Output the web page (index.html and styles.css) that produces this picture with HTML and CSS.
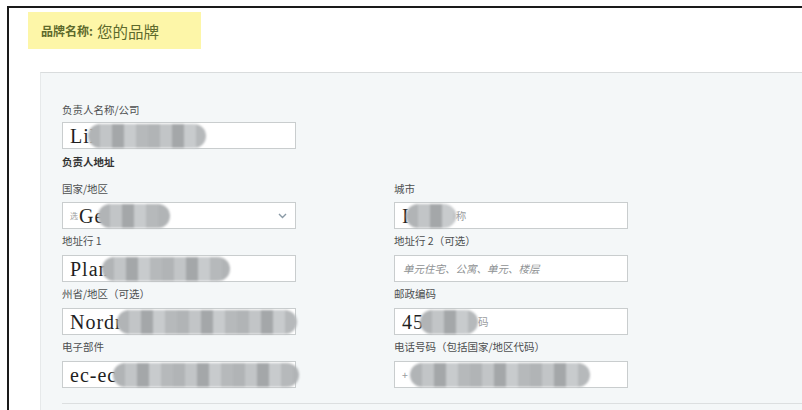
FILE: index.html
```html
<!DOCTYPE html>
<html lang="zh">
<head>
<meta charset="utf-8">
<title>品牌名称</title>
<link rel="stylesheet" href="styles.css">
</head>
<body>
<div class="frame">
  <div class="brand"><b>品牌名称:</b> <span>您的品牌</span></div>
  <div class="panel">
    <div class="single">
      <label class="lbl first">负责人名称/公司</label>
      <div class="inp"><span class="val">Lil</span><span class="mosaic" style="width:118px;margin-left:-8px"></span></div>
    </div>
    <div class="section">负责人地址</div>
    <div class="grid">
      <div class="field">
        <label class="lbl top">国家/地区</label>
        <div class="inp sel"><span class="ph tiny">选</span><span class="val">Ge</span><span class="mosaic" style="width:72px;margin-left:-6px"></span>
          <svg class="chev" width="9" height="6" viewBox="0 0 9 6"><polyline points="1,1 4.5,4.5 8,1" fill="none" stroke="#8a9aa6" stroke-width="1.4"/></svg>
        </div>
      </div>
      <div class="field">
        <label class="lbl top">城市</label>
        <div class="inp"><span class="val">I</span><span class="mosaic" style="width:50px;margin-left:-4px"></span><span class="ph">称</span></div>
      </div>
      <div class="field">
        <label class="lbl">地址行 1</label>
        <div class="inp"><span class="val">Plan</span><span class="mosaic" style="width:128px;margin-left:-8px"></span></div>
      </div>
      <div class="field">
        <label class="lbl">地址行 2（可选）</label>
        <div class="inp"><span class="ph it">单元住宅、公寓、单元、楼层</span></div>
      </div>
      <div class="field">
        <label class="lbl">州省/地区（可选）</label>
        <div class="inp"><span class="val">Nordr</span><span class="mosaic" style="width:180px;margin-left:-6px"></span></div>
      </div>
      <div class="field">
        <label class="lbl">邮政编码</label>
        <div class="inp"><span class="val">45</span><span class="mosaic" style="width:58px;margin-left:-4px"></span><span class="ph">码</span></div>
      </div>
      <div class="field">
        <label class="lbl">电子部件</label>
        <div class="inp"><span class="val">ec-ec</span><span class="mosaic" style="width:186px;margin-left:-4px"></span></div>
      </div>
      <div class="field">
        <label class="lbl">电话号码（包括国家/地区代码）</label>
        <div class="inp"><span class="ph">+</span><span class="mosaic" style="width:180px;margin-left:2px"></span></div>
      </div>
    </div>
    <div class="divider"></div>
  </div>
</div>
</body>
</html>
```
FILE: styles.css
```css
html, body {
  margin: 0;
  padding: 0;
  background: #ffffff;
  overflow: hidden;
}
body {
  width: 802px;
  height: 410px;
  font-family: "Noto Sans CJK SC", "Noto Sans", sans-serif;
}
.frame {
  margin: 6px 0 0 7px;
  border-left: 2px solid #1a1a1a;
  border-top: 2px solid #1a1a1a;
  height: 404px;
  padding: 4px 0 0 19px;
  box-sizing: border-box;
  display: flex;
  flex-direction: column;
}
.brand {
  width: 173px;
  height: 37px;
  flex-shrink: 0;
  background: #fdf6a8;
  box-sizing: border-box;
  padding-left: 13px;
  display: flex;
  align-items: center;
  gap: 4px;
  color: #5d6a2c;
}
.brand b {
  font-size: 12px;
  font-weight: 700;
}
.brand span {
  font-size: 15.5px;
  font-weight: 400;
}
.panel {
  flex: 1;
  margin: 23px 0 0 12px;
  background: #f4f7f8;
  border-top: 1px solid #d9dcdd;
  border-left: 1px solid #e6e9ea;
  padding: 30px 0 0 21px;
  box-sizing: border-box;
  overflow: hidden;
}
.single {
  width: 234px;
}
.lbl {
  display: block;
  font-size: 10.5px;
  line-height: 14px;
  color: #4d4f50;
  margin: 5px 0 7px;
}
.lbl.first {
  margin: 0 0 5px;
}
.lbl.top {
  margin: 13px 0 6px;
}
.section {
  font-size: 10.5px;
  line-height: 14px;
  font-weight: 700;
  color: #333;
  margin-top: 6px;
}
.grid {
  display: grid;
  grid-template-columns: 234px 234px;
  column-gap: 98px;
}
.inp {
  height: 27px;
  background: #fff;
  border: 1px solid #c9cdce;
  box-sizing: border-box;
  display: flex;
  align-items: center;
  padding-left: 7px;
  overflow: visible;
  white-space: nowrap;
}
.sel {
  position: relative;
}
.chev {
  position: absolute;
  right: 8px;
  top: 10px;
}
.val {
  font-family: "Liberation Serif", serif;
  font-size: 20px;
  color: #1f1f1f;
  letter-spacing: 1px;
  line-height: 24px;
}
.ph {
  font-size: 10.5px;
  color: #9a9c9e;
}
.ph.tiny {
  font-size: 8px;
  margin-right: 1px;
}
.ph.it {
  font-style: italic;
  color: #8e9193;
  padding-left: 1px;
}
.mosaic {
  display: inline-block;
  height: 24px;
  flex-shrink: 0;
  border-radius: 12px;
  background-color: #b9bcbe;
  background-image:
    repeating-linear-gradient(90deg, #b1b4b6 0 12px, #c2c5c7 12px 24px, #a4a7a9 24px 36px, #c8cbcd 36px 48px, #b6b9bb 48px 60px);
  filter: blur(1.2px);
}
.divider {
  margin-top: 15px;
  border-top: 1px solid #dcdfe0;
}
```
